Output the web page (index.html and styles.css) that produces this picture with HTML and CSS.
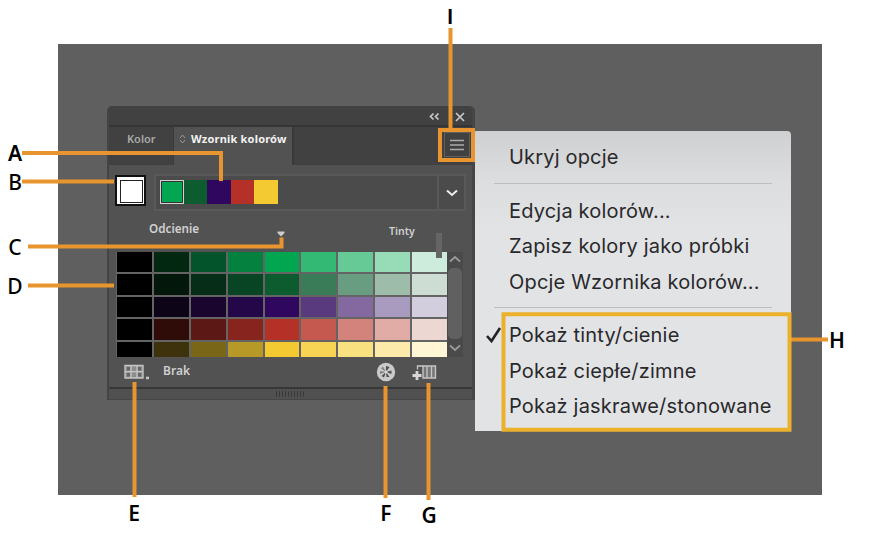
FILE: index.html
```html
<!DOCTYPE html>
<html lang="pl">
<head>
  <meta charset="UTF-8">
  <meta name="viewport" content="width=device-width, initial-scale=1.0">
  <title>Panel Wzornik kolorów</title>
  <link rel="stylesheet" href="styles.css">
</head>
<body>
  <div class="figure">
    <div class="desktop">
      <div class="panel">
        <div class="titlebar">
          <svg class="collapse" width="11" height="9" viewBox="0 0 11 9"><path d="M4.500 1.500 1.500 4.500l3 3M9.500 1.500l-3 3 3 3"/></svg>
          <svg class="close" width="10" height="10" viewBox="0 0 10 10"><path d="M1 1l8 8M9 1 1 9"/></svg>
        </div>
        <div class="tabs">
          <div class="tab">Kolor</div>
          <div class="tab active">
            <svg width="7" height="10" viewBox="0 0 7 10"><path d="M1 4l2.500-3L6 4M1 6l2.500 3L6 6"/></svg>
            <span>Wzornik kolorów</span>
          </div>
          <div class="tab-rest">
            <div class="menu-btn">
              <svg width="16" height="14" viewBox="0 0 16 14"><path d="M1 2.500h14M1 7h14M1 11.500h14"/></svg>
            </div>
          </div>
        </div>

        <div class="base-row">
          <div class="base-color"></div>
          <div class="harmony">
            <div class="harmony-colors">
              <span class="green selected"></span>
              <span class="forest"></span>
              <span class="violet"></span>
              <span class="red"></span>
              <span class="yellow"></span>
            </div>
            <div class="harmony-arrow">
              <svg width="12" height="8" viewBox="0 0 12 8"><path d="M1 1.500 6 6l5-4.500"/></svg>
            </div>
          </div>
        </div>

        <div class="labels">
          <span class="shades">Odcienie</span>
          <svg class="marker" width="8" height="6" viewBox="0 0 8 6"><path d="M.5.5h7v1.500L4 5.500.5 2z"/></svg>
          <span class="tints">Tinty</span>
        </div>

        <div class="variations">
          <div class="grid" id="grid"></div>
          <div class="scrollbar">
            <svg width="12" height="8" viewBox="0 0 12 8"><path d="M1 6.500 6 2l5 4.500"/></svg>
            <div class="thumb"></div>
            <svg width="12" height="8" viewBox="0 0 12 8"><path d="M1 1.500 6 6l5-4.500"/></svg>
          </div>
          <div class="slider-bar"></div>
        </div>

        <div class="toolbar">
          <svg class="library" width="26" height="16" viewBox="0 0 26 16">
            <path d="M.7 1.500h18.600v12.500H.7z" fill="#8c8c8c"/>
            <path d="M3 3h3v3.500H3zM3 9h3v3.500H3zM14 3h3v3.500h-3zM14 9h3v3.500h-3z" fill="#666"/>
            <path d="M1 1.500h18v12.500H1zM1 7.700h18M7 1.500V14M13 1.500V14" fill="none" stroke="#c6c6c6" stroke-width="1.300"/>
            <path d="M22 12.700h3v2.500h-3z" fill="#c6c6c6"/>
          </svg>
          <span class="none">Brak</span>
          <svg class="wheel" width="20" height="20" viewBox="0 0 20 20">
            <circle cx="10" cy="10" r="9.200" fill="#cacaca"/>
            <path d="M10 10V4l3.500 1zM10 10l5.500-1.500v3.500zM10 10l3.500 5H10.500zM10 10l-2 5.500L5.500 14z" fill="#505050"/>
            <path d="M10 10 4 12V9zM10 10 5 6.500 7 4.500z" fill="#858585"/>
            <circle cx="10" cy="10" r="1.500" fill="#ddd"/>
          </svg>
          <svg class="save" width="25" height="17" viewBox="0 0 25 17">
            <path d="M11 2h12.500v12H11z" fill="#777" stroke="#c6c6c6" stroke-width="1.400"/>
            <path d="M15 2v12M19.500 2v12" stroke="#c6c6c6" stroke-width="1.300"/>
            <path d="M5.500 5.500V2H11" fill="none" stroke="#c6c6c6" stroke-width="1.300"/>
            <path d="M5 7v9M.5 11.500h9" stroke="#d6d6d6" stroke-width="2.800"/>
          </svg>
        </div>
        <div class="grip"><div class="grip-lines"></div></div>
      </div>

      <div class="menu">
        <div class="item">Ukryj opcje</div>
        <div class="separator"></div>
        <div class="item">Edycja kolorów...</div>
        <div class="item">Zapisz kolory jako próbki</div>
        <div class="item">Opcje Wzornika kolorów...</div>
        <div class="separator"></div>
        <div class="item">
          <svg class="check" width="17" height="18" viewBox="0 0 17 18"><path d="M2 10l4.500 5L15 2"/></svg>
          Pokaż tinty/cienie
        </div>
        <div class="item">Pokaż ciepłe/zimne</div>
        <div class="item">Pokaż jaskrawe/stonowane</div>
      </div>
    </div>

    <!-- callout lines -->
    <svg class="callouts" width="880" height="540" viewBox="0 0 880 540">
      <path d="M22 153h199v28M22 181.500h92M28 246.500h253.500v-9M28 285.500h86M134.500 382v115M385.500 386v112M428.500 383v117M450.500 28v101M791 339.500h37"/>
      <path d="M440 130h33v30h-33z"/>
      <path class="frame" d="M503.500 314.200h286v115.500h-286z"/>
    </svg>
    <span class="letter a">A</span>
    <span class="letter b">B</span>
    <span class="letter c">C</span>
    <span class="letter d">D</span>
    <span class="letter e">E</span>
    <span class="letter f">F</span>
    <span class="letter g">G</span>
    <span class="letter h">H</span>
    <span class="letter i">I</span>
  </div>

  <script>
    const rows = [
      ['#000000', '#032812', '#03542a', '#04803f', '#02a651', '#34b974', '#66ca96', '#98dbb7', '#cdecdc'],
      ['#000000', '#03170b', '#052d17', '#074524', '#0c5c30', '#3b7c58', '#699d81', '#9dbca9', '#cdddd3'],
      ['#000000', '#0d0418', '#19052e', '#230748', '#2f075f', '#593a7e', '#83699f', '#a99bc0', '#d3cede'],
      ['#000000', '#300c09', '#5b1814', '#88241e', '#b53128', '#c5594f', '#d3827c', '#e1aca6', '#edd7d3'],
      ['#000000', '#3d320b', '#796617', '#b69927', '#f3ca32', '#f7d453', '#fae180', '#fceaab', '#fef6d5']
    ];
    const grid = document.getElementById('grid');
    rows.flat().forEach(color => {
      const cell = document.createElement('span');
      cell.style.background = color;
      grid.appendChild(cell);
    });
  </script>
</body>
</html>
```
FILE: styles.css
```css
* {
  margin: 0;
  padding: 0;
  box-sizing: border-box;
}

body {
  background: #fff;
  font-family: 'Noto Sans', 'Open Sans', sans-serif;
}

svg {
  display: block;
  flex: none;
}

.figure {
  position: relative;
  width: 880px;
  height: 540px;
  padding: 44px 58px 45px;
  overflow: hidden;
}

.desktop {
  position: relative;
  width: 764px;
  height: 451px;
  background: #5f5f5f;
}

.panel {
  position: absolute;
  left: 49px;
  top: 62px;
  width: 368px;
  height: 294px;
  display: flex;
  flex-direction: column;
  background: #525252;
  border-left: 2px solid #444;
  border-right: 3px solid #464646;
  border-radius: 5px 5px 0 0;
  color: #d0d0d0;
}

.titlebar {
  height: 21px;
  flex: none;
  display: flex;
  align-items: center;
  justify-content: flex-end;
  gap: 15px;
  padding: 2px 7px 0 0;
  background: #414141;
  border-bottom: 2px solid #353535;
  border-radius: 4px 4px 0 0;
}

.titlebar path {
  fill: none;
  stroke: #c8c8c8;
  stroke-width: 1.7;
}

.tabs {
  display: flex;
  height: 38px;
  flex: none;
  font-size: 11px;
  font-weight: 600;
}

.tab {
  width: 65px;
  padding: 4px 0 0 18px;
  background: #414141;
  border-right: 1px solid #3a3a3a;
  color: #aaa;
}

.tab.active {
  width: 118px;
  display: flex;
  gap: 5px;
  padding: 4px 0 0 5px;
  background: #525252;
  border: 0;
  color: #f2f2f2;
  font-weight: 700;
  letter-spacing: 0.2px;
  white-space: nowrap;
}

.active svg {
  margin-top: 3px;
}

.active path {
  fill: none;
  stroke: #999;
}

.tab-rest {
  flex: 1;
  display: flex;
  justify-content: flex-end;
  padding: 5px 2px 0 0;
  background: #414141;
  border-left: 2px solid #393939;
}

.menu-btn {
  display: flex;
  align-items: center;
  justify-content: center;
  width: 26px;
  height: 25px;
  background: #414141;
  border: 1px solid #606060;
}

.menu-btn path {
  stroke: #ababab;
  stroke-width: 1.4;
}

.base-row {
  display: flex;
  gap: 8px;
  height: 46px;
  padding: 9px 6px 0 6px;
}

.base-color {
  width: 31px;
  height: 31px;
  margin-top: 1px;
  background: #fff;
  border: 2px solid #111;
  padding: 3px;
}

.base-color::before {
  content: '';
  display: block;
  width: 21px;
  height: 21px;
  border: 1px solid #222;
}

.harmony {
  flex: 1;
  display: flex;
  height: 37px;
  background: #4b4b4b;
  border: 2px solid #595959;
}

.harmony-colors {
  flex: 1;
  display: flex;
  padding: 4px 0 0 4px;
}

.harmony-colors span {
  width: 23.5px;
  height: 24px;
}

.harmony-colors .selected {
  border: 1px solid #d2d2d2;
  outline: 1px solid #333;
  outline-offset: -2px;
}

.green { background: #02a651; }
.forest { background: #0c5c30; }
.violet { background: #2f075f; }
.red { background: #b53128; }
.yellow { background: #f3ca32; }

.harmony-arrow {
  width: 27px;
  display: flex;
  align-items: center;
  justify-content: center;
  border-left: 2px solid #595959;
}

.harmony-arrow path {
  fill: none;
  stroke: #eee;
  stroke-width: 2;
}

.labels {
  display: flex;
  height: 41px;
  padding: 9px 0 0 40px;
  font-weight: 600;
  line-height: 17px;
}

.shades {
  width: 128px;
  font-size: 11.7px;
}

.marker {
  margin-top: 11px;
  fill: #ccc;
}

.tints {
  margin: 3px 0 0 104px;
  font-size: 10.5px;
}

.variations {
  position: relative;
  display: flex;
  height: 105px;
  margin-left: 7px;
}

.grid {
  width: 331px;
  height: 105px;
  display: grid;
  grid-template-columns: repeat(9, 1fr);
  grid-template-rows: 20px 21px 20px 21px 15px;
  gap: 2px;
  padding-left: 1px;
  background: #646464;
}

.scrollbar {
  width: 16px;
  display: flex;
  flex-direction: column;
  align-items: center;
  gap: 5px;
  padding: 3px 0 5px;
  background: #4a4a4a;
}

.scrollbar path {
  fill: none;
  stroke: #999;
  stroke-width: 1.8;
}

.thumb {
  flex: 1;
  width: 14px;
  background: #606060;
  border-radius: 5px;
}

.slider-bar {
  position: absolute;
  left: 320px;
  top: -19px;
  width: 6px;
  height: 25px;
  background: #656565;
}

.toolbar {
  display: flex;
  height: 30px;
  padding: 5px 0 0 15px;
}

.library {
  margin-top: 2px;
}

.none {
  width: 54px;
  margin-left: 13px;
  font-size: 12px;
  font-weight: 600;
  line-height: 18px;
}

.wheel {
  margin-left: 159px;
}

.save {
  margin: 2px 0 0 16px;
}

.grip {
  height: 13px;
  display: flex;
  align-items: center;
  justify-content: center;
  background: #505050;
  border-top: 2px solid #373737;
  border-bottom: 1px solid #454545;
}

.grip-lines {
  width: 29px;
  height: 6px;
  background: repeating-linear-gradient(90deg, #3a3a3a 0 1px, #505050 1px 3px);
}

.menu {
  position: absolute;
  left: 417px;
  top: 87px;
  width: 316px;
  height: 300px;
  padding: 8px 19px 0;
  background: linear-gradient(#cfd0d1, #dcddde 50px, #e2e3e5 100px);
  border-radius: 1px 4px 0 0;
  color: #29292b;
  font-family: Inter, sans-serif;
  font-size: 20px;
  letter-spacing: 0.18px;
}

.item {
  position: relative;
  height: 35.5px;
  padding-left: 15px;
  line-height: 36px;
  white-space: nowrap;
}

.separator {
  height: 1px;
  margin: 8px 0 9px;
  background: #bcbdbf;
}

.check {
  position: absolute;
  left: -9px;
  top: 9px;
}

.check path {
  fill: none;
  stroke: #242426;
  stroke-width: 2.6;
}

.callouts {
  position: absolute;
  left: 0;
  top: 0;
}

.callouts path {
  fill: none;
  stroke: #e8952f;
  stroke-width: 4;
}

.callouts .frame {
  stroke: #ebb12d;
}

/* callout letters */
.letter {
  position: absolute;
  width: 24px;
  text-align: center;
  color: #000;
  font-size: 21px;
  font-weight: 600;
  line-height: 24px;
}

.a { left: 3px; top: 141px; }
.b { left: 3px; top: 170px; font-weight: 500; }
.c { left: 3px; top: 235px; font-weight: 500; }
.d { left: 3px; top: 274px; font-weight: 500; }
.e { left: 122px; top: 501px; }
.f { left: 374px; top: 501px; }
.g { left: 417px; top: 503px; }
.h { left: 825px; top: 328px; }
.i { left: 438px; top: 4px; font-family: Lato, sans-serif; font-weight: 700; }
```
